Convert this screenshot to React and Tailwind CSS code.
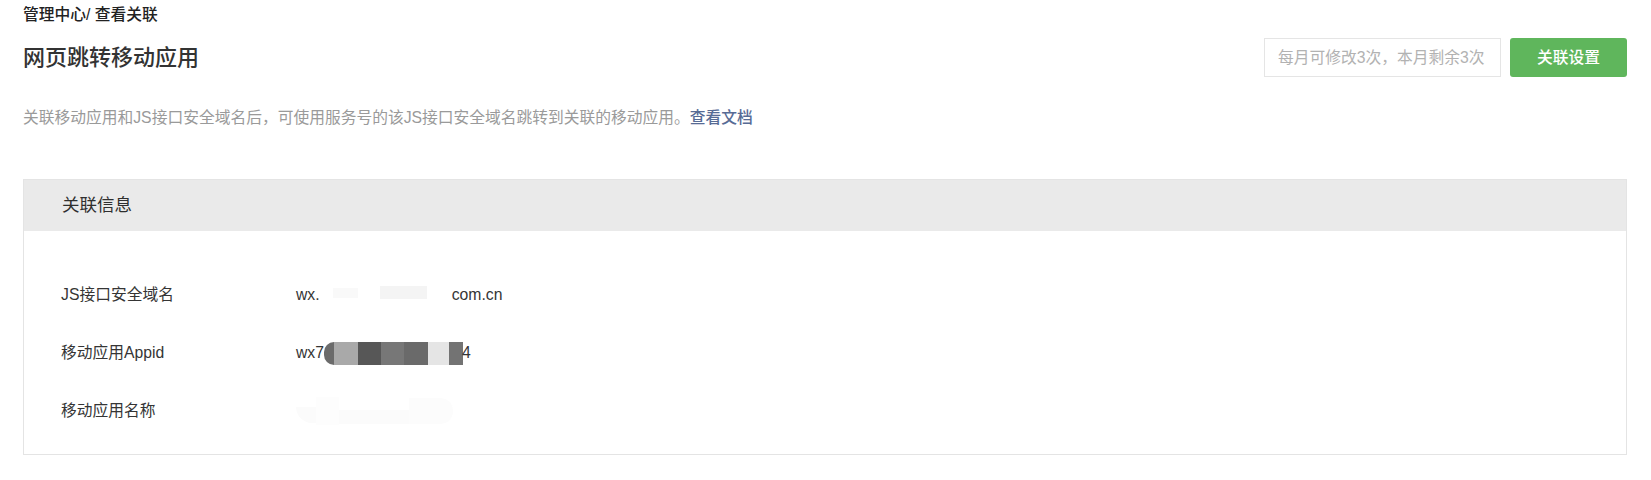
import React from 'react';

const rows = [
  { label: 'JS接口安全域名', kind: 'domain' },
  { label: '移动应用Appid', kind: 'appid' },
  { label: '移动应用名称', kind: 'name' },
];

// pixelated blocks that hide part of the appid
const mosaic = ['#a9a9a9', '#575757', '#777777', '#6a6a6a', '#e5e5e5', '#737373'];
const mosaicW = [24, 23, 23, 24, 21, 14];

const Value = ({ kind }) => {
  if (kind === 'domain') {
    return (
      <div className="flex items-center">
        <span>wx.</span>
        <span className="ml-[13px] -mt-[4px] w-[25px] h-[10px] bg-[#f9f9f9]" />
        <span className="ml-[22px] -mt-[5px] w-[47px] h-[13px] bg-[#f4f4f4]" />
        <span className="ml-[25px]">com.cn</span>
      </div>
    );
  }
  if (kind === 'appid') {
    return (
      <div className="flex items-center">
        <span>wx7</span>
        <span className="flex h-[23px] items-stretch">
          <span className="w-[10px] rounded-l-full bg-[#6b6b6b]" />
          {mosaic.map((c, i) => (
            <span key={i} style={{ backgroundColor: c, width: mosaicW[i] }} />
          ))}
        </span>
        <span className="-ml-[1px]">4</span>
      </div>
    );
  }
  return (
    <div className="flex items-center h-[28px]">
      <span className="w-[20px] h-[16px] mt-[8px] rounded-bl-full bg-[#fbfbfb]" />
      <span className="w-[23px] h-[28px] bg-[#fdfdfd]" />
      <span className="w-[70px] h-[14px] mt-[12px] bg-[#fbfbfb]" />
      <span className="w-[44px] h-[26px] rounded-r-full bg-[#fcfcfc]" />
    </div>
  );
};

const App = () => {
  return (
    <div
      className="min-h-screen bg-white pl-[23px] pr-[24px] text-[#353535]"
      style={{ fontFamily: '"Liberation Sans", "Noto Sans CJK SC", sans-serif' }}
    >
      {/* Breadcrumb */}
      <div className="pt-[5px] text-[15.75px] leading-[20px] font-medium text-[#222]">
        管理中心/ 查看关联
      </div>

      {/* Title + actions */}
      <div className="mt-[13px] flex items-center justify-between h-[39px]">
        <h1 className="text-[22px] leading-[30px] font-medium text-[#333]">网页跳转移动应用</h1>
        <div className="flex items-center gap-[9px]">
          <div className="w-[237px] h-[39px] border border-[#e5e5e5] pl-[13px] flex items-center text-[15.75px] text-[#b2b2b2]">
            每月可修改3次，本月剩余3次
          </div>
          <button className="w-[117px] h-[39px] rounded-[3px] bg-[#5fb65c] text-white text-[15.75px] font-medium">
            关联设置
          </button>
        </div>
      </div>

      {/* Description */}
      <p className="mt-[29px] text-[15.75px] leading-[24px] text-[#9a9a9a]">
        关联移动应用和JS接口安全域名后，可使用服务号的该JS接口安全域名跳转到关联的移动应用。
        <a className="text-[#576b95] font-medium">查看文档</a>
      </p>

      {/* Info panel */}
      <div className="mt-[49px] border border-[#e4e4e4]">
        <div className="h-[51px] bg-[#eaeaea] flex items-center pl-[38px] text-[17.5px] text-[#2f2f2f]">
          关联信息
        </div>
        <div className="pt-[35px] pb-[14px]">
          {rows.map((r) => (
            <div key={r.label} className="h-[58px] flex items-center text-[15.75px]">
              <div className="w-[272px] pl-[37px]">{r.label}</div>
              <Value kind={r.kind} />
            </div>
          ))}
        </div>
      </div>
    </div>
  );
};

export default App;
